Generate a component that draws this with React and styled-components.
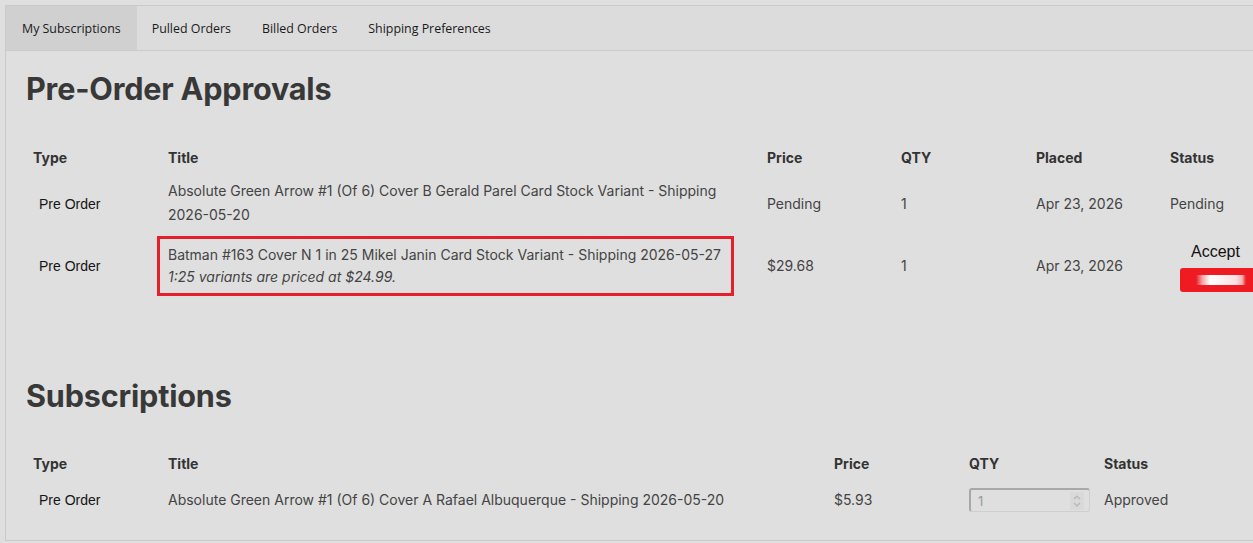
import React from 'react'
import styled, { createGlobalStyle } from 'styled-components'

const Global = createGlobalStyle`
  html, body {
    margin: 0;
    background: #dfdfdf;
    overflow: hidden;
  }
`

const Page = styled.div`
  padding: 5px 0 0 5px;
  width: 1330px;
`

const Panel = styled.div`
  border: 1px solid #cacaca;
  border-right: none;
  background: #dfdfdf;
  height: 536px;
  box-sizing: border-box;
`

const TabBar = styled.div`
  display: flex;
  height: 44px;
  border-bottom: 1px solid #cbcbcb;
  background: #dcdcdc;
`

const Tab = styled.div`
  display: flex;
  align-items: center;
  padding: 0 16px 0 ${p => (p.active ? 16 : 15)}px;
  font-family: "Open Sans", sans-serif;
  font-size: 12.4px;
  color: #1a1a1a;
  background: ${p => (p.active ? '#d0d0d0' : 'transparent')};
`

const Content = styled.div`
  padding: 17px 20px 0 20px;
`

const Heading = styled.h2`
  margin: 0;
  font-family: Inter, sans-serif;
  font-size: 30.6px;
  font-weight: 700;
  color: #383838;
  line-height: 42px;
  letter-spacing: -0.2px;
`

const Table = styled.table`
  table-layout: fixed;
  width: ${p => p.w}px;
  border-collapse: collapse;
  margin-top: ${p => p.top}px;
  font-family: Inter, sans-serif;
  font-size: 14px;
  color: #444;
`

const Th = styled.th`
  text-align: left;
  font-weight: 700;
  color: #333;
  padding: 0 7px 2px;
  height: 40px;
  vertical-align: middle;
`

const Td = styled.td`
  padding: ${p => (p.pad ? p.pad : '0 7px')};
  height: ${p => (p.h ? `${p.h}px` : 'auto')};
  line-height: 24px;
  vertical-align: middle;
  overflow: visible;
`

const TypeCell = styled(Td)`
  padding-left: 13px;
  font-family: "Liberation Sans", Arial, sans-serif;
  color: #151515;
`

const Highlight = styled.div`
  display: inline-block;
  margin-left: -11px;
  border: 3px solid #e4202a;
  padding: 5px 10px 5px 8px;
  line-height: 22px;
`

const Note = styled.div`
  font-style: italic;
`

const AcceptWrap = styled.div`
  display: flex;
  flex-direction: column;
  align-items: flex-start;
  padding-top: 2px;
`

const AcceptLabel = styled.div`
  font-family: "Liberation Sans", Arial, sans-serif;
  font-size: 16px;
  color: #111;
  line-height: 20px;
  margin-left: 21px;
`

const RedBar = styled.div`
  margin-top: 6px;
  margin-left: 10px;
  width: 133px;
  flex-shrink: 0;
  height: 24px;
  border-radius: 3px;
  background: linear-gradient(
    to bottom,
    #ee1c22 0,
    #ee1c22 7px,
    transparent 7px,
    transparent 17px,
    #ee1c22 17px
  ),
  linear-gradient(
    to right,
    #ee1c22 0,
    #ee1c22 16px,
    #f4a0a2 22px,
    #ffffff 30px,
    #fbe0e0 56px,
    #f5b5b5 62px,
    #ee1c22 66px
  );
`

const QtyBox = styled.div`
  display: flex;
  align-items: center;
  justify-content: space-between;
  width: 121px;
  height: 24px;
  box-sizing: border-box;
  border: 1px solid #cfcfcf;
  border-top: 2px solid #a8a8a8;
  border-left: 2px solid #a8a8a8;
  border-radius: 3px;
  padding: 0 5px 0 7px;
  color: #9a9a9a;
  font-size: 13px;
`

const Spinner = styled.svg`
  width: 14px;
  height: 18px;
`

const Spacer = styled.div`
  height: ${p => p.h}px;
`

const approvals = [
  {
    type: 'Pre Order',
    title: 'Absolute Green Arrow #1 (Of 6) Cover B Gerald Parel Card Stock Variant - Shipping 2026-05-20',
    price: 'Pending',
    qty: '1',
    placed: 'Apr 23, 2026',
    status: 'Pending',
  },
]

const App = () => {
  return (
    <Page>
      <Global />
      <Panel>
        <TabBar>
          <Tab active>My Subscriptions</Tab>
          <Tab>Pulled Orders</Tab>
          <Tab>Billed Orders</Tab>
          <Tab>Shipping Preferences</Tab>
        </TabBar>
        <Content>
          <Heading>Pre-Order Approvals</Heading>
          <Table top={27} w={1272}>
            <colgroup>
              <col style={{ width: 135 }} />
              <col style={{ width: 599 }} />
              <col style={{ width: 134 }} />
              <col style={{ width: 135 }} />
              <col style={{ width: 134 }} />
              <col style={{ width: 135 }} />
            </colgroup>
            <thead>
              <tr>
                <Th>Type</Th>
                <Th>Title</Th>
                <Th>Price</Th>
                <Th>QTY</Th>
                <Th>Placed</Th>
                <Th>Status</Th>
              </tr>
            </thead>
            <tbody>
              {approvals.map(a => (
                <tr key={a.title}>
                  <TypeCell>{a.type}</TypeCell>
                  <Td pad="0 7px 1px">{a.title}</Td>
                  <Td>{a.price}</Td>
                  <Td>{a.qty}</Td>
                  <Td>{a.placed}</Td>
                  <Td>{a.status}</Td>
                </tr>
              ))}
              <tr>
                <TypeCell>Pre Order</TypeCell>
                <Td pad="8px 7px 7px">
                  <Highlight>
                    Batman #163 Cover N 1 in 25 Mikel Janin Card Stock Variant - Shipping 2026-05-27
                    <Note>1:25 variants are priced at $24.99.</Note>
                  </Highlight>
                </Td>
                <Td>$29.68</Td>
                <Td>1</Td>
                <Td>Apr 23, 2026</Td>
                <Td>
                  <AcceptWrap>
                    <AcceptLabel>Accept</AcceptLabel>
                    <RedBar />
                  </AcceptWrap>
                </Td>
              </tr>
            </tbody>
          </Table>
          <Spacer h={72} />
          <Heading>Subscriptions</Heading>
          <Table top={26} w={1206}>
            <colgroup>
              <col style={{ width: 135 }} />
              <col style={{ width: 666 }} />
              <col style={{ width: 135 }} />
              <col style={{ width: 135 }} />
              <col style={{ width: 135 }} />
            </colgroup>
            <thead>
              <tr>
                <Th>Type</Th>
                <Th>Title</Th>
                <Th>Price</Th>
                <Th>QTY</Th>
                <Th>Status</Th>
              </tr>
            </thead>
            <tbody>
              <tr>
                <TypeCell h={30}>Pre Order</TypeCell>
                <Td h={30}>Absolute Green Arrow #1 (Of 6) Cover A Rafael Albuquerque - Shipping 2026-05-20</Td>
                <Td h={30}>$5.93</Td>
                <Td h={30}>
                  <QtyBox>
                    <span>1</span>
                    <Spinner viewBox="0 0 14 18">
                      <rect x="0" y="0" width="14" height="18" fill="#d9d9d9" />
                      <path d="M4 7 L7 4 L10 7" fill="none" stroke="#b5b5b5" strokeWidth="1.2" />
                      <path d="M4 11 L7 14 L10 11" fill="none" stroke="#b5b5b5" strokeWidth="1.2" />
                    </Spinner>
                  </QtyBox>
                </Td>
                <Td h={30}>Approved</Td>
              </tr>
            </tbody>
          </Table>
        </Content>
      </Panel>
    </Page>
  )
}

export default App
